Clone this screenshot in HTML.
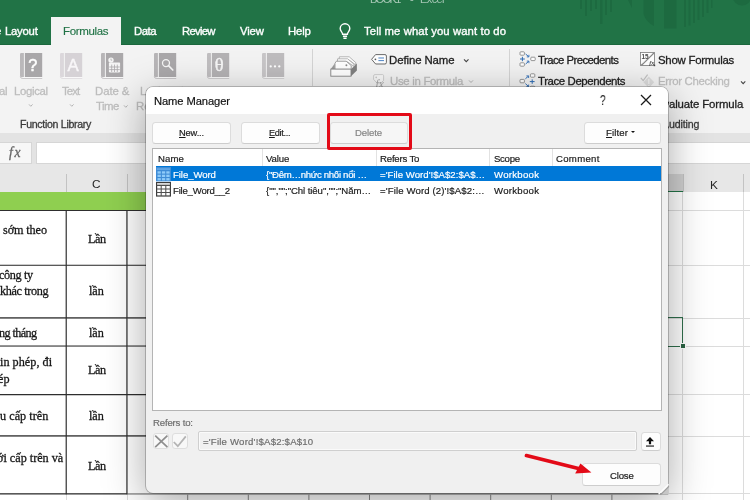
<!DOCTYPE html>
<html lang="vi"><head><meta charset="utf-8"><title>Name Manager</title>
<style>
html,body{margin:0;padding:0}
body{width:750px;height:500px;overflow:hidden;position:relative;background:#fff;font-family:"Liberation Sans",sans-serif}
.a{position:absolute}
.t{position:absolute;white-space:nowrap;line-height:1;will-change:transform}
.t u{text-decoration-thickness:.8px;text-underline-offset:1px}
svg{position:absolute;overflow:visible;will-change:transform}
.btn{position:absolute;box-sizing:border-box;background:#fdfdfd;border:1px solid #dcdcdc;border-bottom-color:#cdcdcd;border-radius:3.5px}
.hl{position:absolute;left:0;width:750px;height:1px}
.vl{position:absolute;width:1px}
</style></head><body>

<!-- ===== title bar / tabs ===== -->
<div class="a" id="titlebar" style="left:0;top:0;width:750px;height:45.4px;background:#217346;box-sizing:border-box;border-bottom:1.5px solid #1b673d"></div>
<svg style="left:560px;top:0" width="190" height="45" viewBox="560 0 190 45">
 <g fill="#1d6a40">
  <rect x="580" y="0" width="2" height="9"/><rect x="585" y="0" width="2" height="16"/><rect x="590" y="0" width="2" height="11"/>
  <rect x="595" y="0" width="2" height="9"/><rect x="600" y="0" width="2.5" height="24"/><rect x="605" y="0" width="2" height="15"/><rect x="610" y="0" width="2" height="12"/>
  <path d="M628 0 L632 0 L632 8 Z"/>
  <path d="M643.5 0 H654 V26 Q646 22 643.5 14 Z"/>
  <rect x="664" y="0" width="12.5" height="28.5"/>
  <rect x="684" y="0" width="2" height="27"/><rect x="688.5" y="0" width="2" height="25.5"/><rect x="693" y="0" width="2" height="23"/><rect x="697.5" y="0" width="2" height="20"/><rect x="702" y="0" width="2" height="17"/><rect x="706.5" y="0" width="2" height="13"/><rect x="711" y="0" width="1.5" height="8"/>
  <circle cx="742" cy="-4" r="9.5"/>
 </g>
</svg>
<div class="a" id="tab-formulas" style="left:51.3px;top:17.4px;width:69.5px;height:29px;background:#f3f3f3"></div>
<!-- lightbulb -->
<svg style="left:338px;top:23px" width="14" height="17" viewBox="0 0 14 17"><g fill="none" stroke="#fff" stroke-width="1.4"><path d="M4.6 11.2 C4.6 9.2 2.2 8.4 2.2 5.6 A4.8 4.8 0 0 1 11.8 5.6 C11.8 8.4 9.4 9.2 9.4 11.2 Z"/><path d="M4.9 13.2 H9.1 M5.4 15.2 H8.6"/></g></svg>

<!-- ===== ribbon ===== -->
<div class="a" id="ribbon" style="left:0;top:45px;width:750px;height:87.5px;background:#f3f3f3"></div>
<div class="vl" style="left:312px;top:49px;height:37px;background:#d4d4d4"></div>
<div class="vl" style="left:509px;top:49px;height:37px;background:#d4d4d4"></div>
<svg style="left:19.8px;top:52.6px" width="22.4" height="25.8" viewBox="0 0 22.4 25.8">
<path d="M1.2 0 H3.9 V24 H1.2 Q0 24 0 22.8 V1.2 Q0 0 1.2 0 Z" fill="#bab8ba"/>
<rect x="4.9" y="0" width="17.3" height="24" fill="#a9a7a9"/>
<path d="M0.3 23.6 Q0.6 25.4 2.2 25.4 H22.2" fill="none" stroke="#bab8ba" stroke-width=".8"/>
<rect x="3" y="24.1" width="19.2" height="0.9" fill="#fafafa"/>
<text x="12.8" y="18.3" font-family="'Liberation Sans',sans-serif" font-size="16.3" fill="#fff" stroke="#fff" stroke-width=".55" text-anchor="middle">?</text></svg>
<svg style="left:60.1px;top:52.6px" width="22.4" height="25.8" viewBox="0 0 22.4 25.8">
<path d="M1.2 0 H3.9 V24 H1.2 Q0 24 0 22.8 V1.2 Q0 0 1.2 0 Z" fill="#dbd7db"/>
<rect x="4.9" y="0" width="17.3" height="24" fill="#d6d2d6"/>
<path d="M0.3 23.6 Q0.6 25.4 2.2 25.4 H22.2" fill="none" stroke="#dbd7db" stroke-width=".8"/>
<rect x="3" y="24.1" width="19.2" height="0.9" fill="#fafafa"/>
<text x="13.1" y="18.2" font-family="'Liberation Sans',sans-serif" font-size="16.8" fill="#f8f6f8" stroke="#f8f6f8" stroke-width=".45" text-anchor="middle">A</text></svg>
<svg style="left:100.8px;top:52.6px" width="22.4" height="25.8" viewBox="0 0 22.4 25.8">
<path d="M1.2 0 H3.9 V24 H1.2 Q0 24 0 22.8 V1.2 Q0 0 1.2 0 Z" fill="#b7b5b7"/>
<rect x="4.9" y="0" width="17.3" height="24" fill="#aaa8aa"/>
<path d="M0.3 23.6 Q0.6 25.4 2.2 25.4 H22.2" fill="none" stroke="#b7b5b7" stroke-width=".8"/>
<rect x="3" y="24.1" width="19.2" height="0.9" fill="#fafafa"/>
<circle cx="10" cy="7.1" r="2.7" fill="#f4f4f4"/><path d="M10 5.6 V7.2 H11.2" stroke="#a9a7a9" stroke-width=".7" fill="none"/><rect x="7.9" y="9.6" width="11.2" height="9.8" rx=".8" fill="#f4f4f4"/><path d="M10.7 11.6 V19 M13.5 11.6 V19 M16.3 11.6 V19 M8.3 14 H18.8 M8.3 16.6 H18.8" stroke="#a9a7a9" stroke-width=".8" fill="none"/></svg>
<svg style="left:153.9px;top:52.6px" width="22.4" height="25.8" viewBox="0 0 22.4 25.8">
<path d="M1.2 0 H3.9 V24 H1.2 Q0 24 0 22.8 V1.2 Q0 0 1.2 0 Z" fill="#b7b5b7"/>
<rect x="4.9" y="0" width="17.3" height="24" fill="#aaa8aa"/>
<path d="M0.3 23.6 Q0.6 25.4 2.2 25.4 H22.2" fill="none" stroke="#b7b5b7" stroke-width=".8"/>
<rect x="3" y="24.1" width="19.2" height="0.9" fill="#fafafa"/>
<circle cx="12" cy="10.1" r="3.5" fill="none" stroke="#f6f6f6" stroke-width="1.3"/><path d="M14.5 12.7 L18.8 17" stroke="#f6f6f6" stroke-width="1.7" stroke-linecap="round"/></svg>
<svg style="left:207.3px;top:52.6px" width="22.4" height="25.8" viewBox="0 0 22.4 25.8">
<path d="M1.2 0 H3.9 V24 H1.2 Q0 24 0 22.8 V1.2 Q0 0 1.2 0 Z" fill="#c0bec0"/>
<rect x="4.9" y="0" width="17.3" height="24" fill="#b4b2b4"/>
<path d="M0.3 23.6 Q0.6 25.4 2.2 25.4 H22.2" fill="none" stroke="#c0bec0" stroke-width=".8"/>
<rect x="3" y="24.1" width="19.2" height="0.9" fill="#fafafa"/>
<text x="12.1" y="18.4" font-family="'Liberation Serif',serif" font-size="18.6" fill="#f6f6f6" stroke="#f6f6f6" stroke-width=".4" text-anchor="middle">θ</text></svg>
<svg style="left:262.2px;top:52.6px" width="22.4" height="25.8" viewBox="0 0 22.4 25.8">
<path d="M1.2 0 H3.9 V24 H1.2 Q0 24 0 22.8 V1.2 Q0 0 1.2 0 Z" fill="#c8c6c8"/>
<rect x="4.9" y="0" width="17.3" height="24" fill="#bebcbe"/>
<path d="M0.3 23.6 Q0.6 25.4 2.2 25.4 H22.2" fill="none" stroke="#c8c6c8" stroke-width=".8"/>
<rect x="3" y="24.1" width="19.2" height="0.9" fill="#fafafa"/>
<circle cx="8.7" cy="13.4" r="1.15" fill="#fff"/><circle cx="13" cy="13.4" r="1.15" fill="#fff"/><circle cx="17.3" cy="13.4" r="1.15" fill="#fff"/></svg>
<svg style="left:29.3px;top:104.4px" width="3.6" height="2.9" viewBox="0 0 3.6 2.9"><path d="M0 0.4 L1.8 2.3 L3.6 0.4" fill="none" stroke="#b4b4b4" stroke-width="1.0"/></svg>
<svg style="left:69.7px;top:104.4px" width="3.6" height="2.9" viewBox="0 0 3.6 2.9"><path d="M0 0.4 L1.8 2.3 L3.6 0.4" fill="none" stroke="#b4b4b4" stroke-width="1.0"/></svg>
<svg style="left:124px;top:104.8px" width="3.6" height="2.9" viewBox="0 0 3.6 2.9"><path d="M0 0.4 L1.8 2.3 L3.6 0.4" fill="none" stroke="#b4b4b4" stroke-width="1.0"/></svg>
<svg style="left:464.4px;top:58.7px" width="4.5" height="3.3" viewBox="0 0 4.5 3.3"><path d="M0 0.4 L2.25 2.6999999999999997 L4.5 0.4" fill="none" stroke="#444" stroke-width="1.05"/></svg>
<svg style="left:468.6px;top:80.2px" width="4" height="3.1" viewBox="0 0 4 3.1"><path d="M0 0.4 L2.0 2.5 L4 0.4" fill="none" stroke="#b4b4b4" stroke-width="1.0"/></svg>
<svg style="left:741px;top:81px" width="4.3" height="3.3" viewBox="0 0 4.3 3.3"><path d="M0 0.4 L2.15 2.6999999999999997 L4.3 0.4" fill="none" stroke="#444" stroke-width="1.05"/></svg>
<svg style="left:330px;top:55.6px" width="28" height="21.4" viewBox="0 0 28 21.4">
<path d="M9.4 0.8 H19.2 L25.8 6.6 V9 L19 4 H9 Z" fill="#fff" stroke="#9a9a9a" stroke-width=".7"/>
<path d="M7.6 2.8 H17.6 L24 8.2 V10.4 L17.6 6 H7.4 Z" fill="#fff" stroke="#9a9a9a" stroke-width=".7"/>
<path d="M6.4 5.2 H16.2 L21.2 9.6 V13.4 H5 V7.2 Z" fill="#fff" stroke="#8a8a8a" stroke-width=".8"/>
<circle cx="16.4" cy="9.3" r=".95" fill="#8a8a8a"/>
<path d="M0.8 13 L4.8 7.6 V13 Z" fill="#9a9a9a"/>
<path d="M21 13.2 L26.9 7.6 V14.4 L21 20.2 Z" fill="#808080"/>
<rect x="0.8" y="13.1" width="20.2" height="7.1" fill="#fff" stroke="#858585" stroke-width=".9"/>
</svg>
<svg style="left:371px;top:53.8px" width="16" height="10.6" viewBox="0 0 16 10.6">
<path d="M4.6 0.6 H14 Q15.4 0.6 15.4 2 V8.6 Q15.4 10 14 10 H4.6 L0.6 5.3 Z" fill="#fff" stroke="#5a5a5a" stroke-width=".9"/>
<circle cx="4.4" cy="5.3" r=".9" fill="#5a5a5a"/>
<path d="M7.4 4 H13 M7.4 6.6 H13" stroke="#3b78c2" stroke-width=".9"/>
</svg>
<svg style="left:373px;top:73.6px" width="12" height="14" viewBox="0 0 12 14">
<path d="M2 0.6 H9.6 Q10.6 0.6 10.6 1.6 V6.4 L8 9 H4 L0.6 5.4 V2 Q0.6 0.6 2 0.6 Z" fill="#f8f8f8" stroke="#c4c4c4" stroke-width=".8"/>
<circle cx="3.2" cy="3.4" r=".8" fill="#c4c4c4"/>
<text x="2.6" y="13.6" font-family="'Liberation Serif',serif" font-style="italic" font-size="11.5" fill="#a6a6a6">fx</text>
</svg>
<svg style="left:518.6px;top:50.8px" width="17" height="17" viewBox="0 0 17 17">
<g fill="#fff" stroke="#7d7d7d" stroke-width=".8"><rect x="1" y="0.8" width="4.4" height="3.4" rx=".8"/><rect x="1" y="11.8" width="4.4" height="3.4" rx=".8"/><rect x="11.8" y="6.2" width="4.4" height="3.4" rx=".8"/></g>
<g stroke="#2f6db5" stroke-width="1" fill="none"><path d="M1 8 H5.8 M3.4 5.8 V10.2"/><path d="M6.6 3 L9.6 5.6 M6.6 13 L9.6 10.4"/><path d="M7.8 5.9 H9.9 V3.8 M7.8 10.1 H9.9 V12.2" stroke-width=".9"/></g>
</svg>
<svg style="left:518.6px;top:72.8px" width="17" height="17" viewBox="0 0 17 17">
<g fill="#fff" stroke="#7d7d7d" stroke-width=".8"><rect x="1" y="6.4" width="4.4" height="3.4" rx=".8"/><rect x="11.4" y="0.8" width="4.4" height="3.4" rx=".8"/><rect x="11.4" y="13.2" width="4.4" height="3.4" rx=".8"/></g>
<g stroke="#2f6db5" stroke-width="1" fill="none"><path d="M10.8 8.6 H15.6 M13.2 6.4 V10.8"/><path d="M6.4 5.8 L9.4 3.2 M6.4 10.6 L9.4 13.4"/><path d="M7.4 2.9 H9.6 V5 M7.4 13.7 H9.6 V11.6" stroke-width=".9"/></g>
</svg>
<svg style="left:640.2px;top:52px" width="15.4" height="14.4" viewBox="0 0 15.4 14.4">
<rect x="0.5" y="0.5" width="14" height="13" fill="#fdfdfd" stroke="#7c7c7c" stroke-width=".8"/>
<path d="M13.8 1 L1.4 13.2" stroke="#858585" stroke-width="1.5"/>
<path d="M12.6 1.4 L2.4 11.6" stroke="#fdfdfd" stroke-width=".5"/>
<text x="1.5" y="6.9" font-family="'Liberation Sans',sans-serif" font-weight="700" font-size="6.4" fill="#4a4a4a">15</text>
<text x="9.2" y="12.6" font-family="'Liberation Serif',serif" font-style="italic" font-weight="700" font-size="6.2" fill="#4a4a4a">fx</text>
<rect x="13.7" y="12.7" width="1.5" height="1.5" fill="#444"/>
</svg>
<svg style="left:640px;top:73.6px" width="15" height="14" viewBox="0 0 15 14">
<path d="M8.8 2.4 L14.2 8.2 L8.8 14 L3.4 8.2 Z" fill="#dcdcdc"/>
<path d="M8.8 5 V10 M8.8 11 V12.2" stroke="#f0f0f0" stroke-width="1.3"/>
<path d="M0.8 3.8 L3.2 6.6 L7.6 0.6" fill="none" stroke="#c2c2c2" stroke-width="1.2"/>
</svg>

<!-- ===== formula bar ===== -->
<div class="a" id="fbar" style="left:0;top:132.5px;width:750px;height:37.5px;background:#e3e3e3"></div>
<div class="a" style="left:-2px;top:142px;width:34px;height:22px;background:#f7f7f7;box-sizing:border-box;border:1px solid #d6d6d6"></div>
<div class="a" style="left:36px;top:142px;width:716px;height:22px;background:#fff;box-sizing:border-box;border:1px solid #d6d6d6"></div>

<!-- ===== column headers ===== -->
<div class="a" id="colhdr" style="left:0;top:164px;width:750px;height:28px;background:#e7e7e7"></div>
<div class="vl" style="left:66px;top:174px;height:18px;background:#c3c3c3"></div>
<div class="vl" style="left:127px;top:174px;height:18px;background:#c3c3c3"></div>
<div class="a" style="left:668px;top:174px;width:14.6px;height:18px;background:#cfcfcf;border-bottom:1.5px solid #217346;box-sizing:border-box"></div>
<div class="vl" style="left:682.6px;top:174px;height:18px;background:#c3c3c3"></div>
<div class="vl" style="left:743px;top:174px;height:18px;background:#c3c3c3"></div>

<!-- ===== sheet ===== -->
<div class="a" id="sheet" style="left:0;top:192px;width:750px;height:308px;background:#fff"></div>
<!-- light grid (right side) -->
<div class="hl" style="top:210px;background:#dcdcdc"></div>
<div class="hl" style="top:265px;background:#dcdcdc"></div>
<div class="hl" style="top:317.5px;background:#dcdcdc"></div>
<div class="hl" style="top:345.5px;background:#dcdcdc"></div>
<div class="hl" style="top:394px;background:#dcdcdc"></div>
<div class="hl" style="top:436px;background:#dcdcdc"></div>
<div class="hl" style="top:493px;background:#dcdcdc"></div>
<div class="vl" style="left:66px;top:192px;height:308px;background:#dcdcdc"></div>
<div class="vl" style="left:127px;top:192px;height:308px;background:#dcdcdc"></div>
<div class="vl" style="left:682.4px;top:192px;height:308px;background:#dcdcdc"></div>
<div class="vl" style="left:743px;top:192px;height:308px;background:#dcdcdc"></div>
<!-- green header row -->
<div class="a" style="left:0;top:192px;width:660px;height:18px;background:#8fcf50"></div>
<!-- dark table borders -->
<svg style="left:0;top:0" width="750" height="500" viewBox="0 0 750 500"><g stroke="#2e2e2e" stroke-width="1.15" fill="none"><path d="M0 210.5 H668"/><path d="M0 265.2 H668"/><path d="M0 317.9 H668"/><path d="M0 346.0 H668"/><path d="M0 394.6 H668"/><path d="M0 435.9 H668"/><path d="M0 493.8 H127.5"/><path d="M66.2 210 V494.3"/><path d="M126.9 210 V494.3"/></g><path d="M127.5 494 H668" stroke="#6e6e6e" stroke-width="1"/><g stroke="#8a8a8a" stroke-width="1"><path d="M187.7 494.5 V500"/><path d="M248.3 494.5 V500"/><path d="M308.9 494.5 V500"/><path d="M369.5 494.5 V500"/><path d="M430.1 494.5 V500"/><path d="M490.7 494.5 V500"/><path d="M551.3 494.5 V500"/><path d="M611.9 494.5 V500"/></g></svg>
<!-- selected cell -->
<div class="a" style="left:660px;top:317.2px;width:23px;height:29.6px;box-sizing:border-box;border:1.6px solid #2f6f4c"></div>
<div class="a" style="left:679.8px;top:343.2px;width:3.8px;height:3.8px;background:#2a6343;border:0.7px solid #fff"></div>

<span class="t" style="left:370.3px;top:-5.70px;font-size:11px;letter-spacing:-1.627px;color:rgba(255,255,255,.6);">BOOK1</span>
<span class="t" style="left:410.2px;top:-5.70px;font-size:11px;letter-spacing:0.000px;color:rgba(255,255,255,.6);">-</span>
<span class="t" style="left:420.0px;top:-5.70px;font-size:11px;letter-spacing:-0.602px;color:rgba(255,255,255,.6);">Excel</span>
<span class="t" style="left:-4.9px;top:25.60px;font-size:11.3px;letter-spacing:0.000px;color:rgba(255,255,255,.97);-webkit-text-stroke:.38px;">e</span>
<span class="t" style="left:5.4px;top:25.60px;font-size:11.3px;letter-spacing:-0.224px;color:rgba(255,255,255,.97);-webkit-text-stroke:.38px;">Layout</span>
<span class="t" style="left:62.8px;top:25.60px;font-size:11.5px;letter-spacing:-0.334px;color:#217346;-webkit-text-stroke:.15px;">Formulas</span>
<span class="t" style="left:133.8px;top:25.60px;font-size:11.3px;letter-spacing:-0.458px;color:rgba(255,255,255,.97);-webkit-text-stroke:.38px;">Data</span>
<span class="t" style="left:181.9px;top:25.60px;font-size:11.3px;letter-spacing:-0.729px;color:rgba(255,255,255,.97);-webkit-text-stroke:.38px;">Review</span>
<span class="t" style="left:240.2px;top:25.60px;font-size:11.3px;letter-spacing:-0.166px;color:rgba(255,255,255,.97);-webkit-text-stroke:.38px;">View</span>
<span class="t" style="left:288.3px;top:25.60px;font-size:11.3px;letter-spacing:-0.145px;color:rgba(255,255,255,.97);-webkit-text-stroke:.38px;">Help</span>
<span class="t" style="left:363.5px;top:25.60px;font-size:11.3px;letter-spacing:0.100px;color:rgba(255,255,255,.97);-webkit-text-stroke:.38px;">Tell me what you want to do</span>
<span class="t" style="left:-1.3px;top:85.60px;font-size:11.4px;letter-spacing:-0.300px;color:#bdbdbd;-webkit-text-stroke:.3px;">al</span>
<span class="t" style="left:14.0px;top:85.60px;font-size:11.4px;letter-spacing:-0.352px;color:#bdbdbd;-webkit-text-stroke:.3px;">Logical</span>
<span class="t" style="left:62.4px;top:85.60px;font-size:11.4px;letter-spacing:-0.897px;color:#bdbdbd;-webkit-text-stroke:.3px;">Text</span>
<span class="t" style="left:94.6px;top:85.60px;font-size:11.4px;letter-spacing:-0.086px;color:#bdbdbd;-webkit-text-stroke:.3px;">Date &amp;</span>
<span class="t" style="left:95.6px;top:101.00px;font-size:11.4px;letter-spacing:-0.497px;color:#bdbdbd;-webkit-text-stroke:.3px;">Time</span>
<span class="t" style="left:140.0px;top:85.60px;font-size:11.4px;letter-spacing:-0.306px;color:#bdbdbd;-webkit-text-stroke:.3px;">Lookup &amp;</span>
<span class="t" style="left:136.0px;top:101.00px;font-size:11.4px;letter-spacing:-0.070px;color:#bdbdbd;-webkit-text-stroke:.3px;">Reference</span>
<span class="t" style="left:19.6px;top:119.40px;font-size:10.6px;letter-spacing:-0.305px;color:#3b3b3b;-webkit-text-stroke:.3px;">Function Library</span>
<span class="t" style="left:389.4px;top:55.00px;font-size:11.4px;letter-spacing:-0.088px;color:#222;-webkit-text-stroke:.3px;">Define Name</span>
<span class="t" style="left:389.8px;top:76.40px;font-size:11.4px;letter-spacing:-0.295px;color:#bdbdbd;-webkit-text-stroke:.3px;">Use in Formula</span>
<span class="t" style="left:538.1px;top:54.80px;font-size:11.4px;letter-spacing:-0.572px;color:#222;-webkit-text-stroke:.3px;">Trace Precedents</span>
<span class="t" style="left:538.1px;top:76.40px;font-size:11.4px;letter-spacing:-0.386px;color:#222;-webkit-text-stroke:.3px;">Trace Dependents</span>
<span class="t" style="left:657.7px;top:54.80px;font-size:11.4px;letter-spacing:-0.237px;color:#222;-webkit-text-stroke:.3px;">Show Formulas</span>
<span class="t" style="left:657.7px;top:76.40px;font-size:11.4px;letter-spacing:-0.313px;color:#bdbdbd;-webkit-text-stroke:.3px;">Error Checking</span>
<span class="t" style="left:655.5px;top:98.80px;font-size:11.4px;letter-spacing:-0.200px;color:#222;-webkit-text-stroke:.3px;">Ev</span>
<span class="t" style="left:668.7px;top:98.80px;font-size:11.4px;letter-spacing:-0.130px;color:#222;-webkit-text-stroke:.3px;">aluate Formula</span>
<span class="t" style="left:622.5px;top:119.20px;font-size:10.6px;letter-spacing:-0.300px;color:#3b3b3b;-webkit-text-stroke:.3px;">Formula A</span>
<span class="t" style="left:668.6px;top:119.20px;font-size:10.6px;letter-spacing:-0.136px;color:#3b3b3b;-webkit-text-stroke:.3px;">uditing</span>
<span class="t" style="left:9.0px;top:146.30px;font-size:13.6px;letter-spacing:1.788px;color:#666;font-family:'Liberation Serif', serif;font-style:italic;-webkit-text-stroke:.3px #666;">fx</span>
<span class="t" style="left:92.3px;top:179.40px;font-size:11.8px;letter-spacing:0.000px;color:#262626;">C</span>
<span class="t" style="left:709.8px;top:179.60px;font-size:11.8px;letter-spacing:0.000px;color:#262626;">K</span>
<span class="t" style="left:3.3px;top:223.80px;font-size:12.2px;letter-spacing:-0.100px;color:#161616;font-family:'Liberation Serif', serif;-webkit-text-stroke:.28px #161616;">sớm theo</span>
<span class="t" style="left:87.6px;top:232.60px;font-size:12.2px;letter-spacing:-0.477px;color:#161616;font-family:'Liberation Serif', serif;-webkit-text-stroke:.28px #161616;">Lần</span>
<span class="t" style="left:-0.6px;top:269.30px;font-size:12.2px;letter-spacing:-0.370px;color:#161616;font-family:'Liberation Serif', serif;-webkit-text-stroke:.28px #161616;">công ty</span>
<span class="t" style="left:-0.2px;top:285.40px;font-size:12.2px;letter-spacing:-0.353px;color:#161616;font-family:'Liberation Serif', serif;-webkit-text-stroke:.28px #161616;">khác trong</span>
<span class="t" style="left:89.1px;top:285.40px;font-size:12.2px;letter-spacing:-0.045px;color:#161616;font-family:'Liberation Serif', serif;-webkit-text-stroke:.28px #161616;">lần</span>
<span class="t" style="left:-1.2px;top:326.60px;font-size:12.2px;letter-spacing:-0.587px;color:#161616;font-family:'Liberation Serif', serif;-webkit-text-stroke:.28px #161616;">ng tháng</span>
<span class="t" style="left:89.1px;top:326.60px;font-size:12.2px;letter-spacing:-0.045px;color:#161616;font-family:'Liberation Serif', serif;-webkit-text-stroke:.28px #161616;">lần</span>
<span class="t" style="left:-0.4px;top:356.00px;font-size:12.2px;letter-spacing:0.030px;color:#161616;font-family:'Liberation Serif', serif;-webkit-text-stroke:.28px #161616;">in phép, đi</span>
<span class="t" style="left:-2.5px;top:372.80px;font-size:12.2px;letter-spacing:0.000px;color:#161616;font-family:'Liberation Serif', serif;-webkit-text-stroke:.28px #161616;">ép</span>
<span class="t" style="left:87.6px;top:364.40px;font-size:12.2px;letter-spacing:-0.477px;color:#161616;font-family:'Liberation Serif', serif;-webkit-text-stroke:.28px #161616;">Lần</span>
<span class="t" style="left:-0.3px;top:410.00px;font-size:12.2px;letter-spacing:0.026px;color:#161616;font-family:'Liberation Serif', serif;-webkit-text-stroke:.28px #161616;">u cấp trên</span>
<span class="t" style="left:89.1px;top:410.00px;font-size:12.2px;letter-spacing:-0.045px;color:#161616;font-family:'Liberation Serif', serif;-webkit-text-stroke:.28px #161616;">lần</span>
<span class="t" style="left:-2.8px;top:451.50px;font-size:12.2px;letter-spacing:-0.011px;color:#161616;font-family:'Liberation Serif', serif;-webkit-text-stroke:.28px #161616;">ới cấp trên và</span>
<span class="t" style="left:87.6px;top:459.60px;font-size:12.2px;letter-spacing:-0.477px;color:#161616;font-family:'Liberation Serif', serif;-webkit-text-stroke:.28px #161616;">Lần</span>

<!-- ===== dialog ===== -->
<div class="a" id="dialog" style="left:146px;top:87px;width:522px;height:406.4px;background:#f0f0f0;border-radius:7px;box-shadow:0 0 0 .8px rgba(0,0,0,.28),0 10px 42px 0 rgba(0,0,0,.35);overflow:hidden">
  <div class="a" style="left:0;top:0;width:522px;height:27px;background:#fff"></div>
</div>
<!-- close X -->
<svg style="left:641px;top:95px" width="10" height="10" viewBox="0 0 10 10"><path d="M0 0 L10 10 M10 0 L0 10" stroke="#1a1a1a" stroke-width="1.25" fill="none"/></svg>
<!-- buttons -->
<div class="btn" style="left:152px;top:121.5px;width:79px;height:22.3px"></div>
<div class="btn" style="left:240.6px;top:121.5px;width:79px;height:22.3px"></div>
<div class="btn" style="left:330px;top:121.5px;width:78px;height:22.3px;background:#f6f6f6"></div>
<div class="btn" style="left:583.5px;top:121.8px;width:77.2px;height:22px"></div>
<div class="a" style="left:631px;top:131px;width:0;height:0;border-left:2.3px solid transparent;border-right:2.3px solid transparent;border-top:2.6px solid #111"></div>
<!-- list -->
<div class="a" id="list" style="left:152.4px;top:148px;width:509.4px;height:263.4px;background:#fff;box-sizing:border-box;border:1px solid #b4b4b4"></div>
<div class="vl" style="left:262px;top:149px;height:16.5px;background:#e2e2e2"></div>
<div class="vl" style="left:375.6px;top:149px;height:16.5px;background:#e2e2e2"></div>
<div class="vl" style="left:489.4px;top:149px;height:16.5px;background:#e2e2e2"></div>
<div class="vl" style="left:551.6px;top:149px;height:16.5px;background:#e2e2e2"></div>
<div class="a" style="left:156.2px;top:166px;width:504.6px;height:15px;background:#0078d7"></div>
<!-- row icons -->
<svg style="left:156.3px;top:166.5px" width="15" height="14.4" viewBox="0 0 15 14.4"><rect x="0" y="0" width="15" height="14.4" fill="#3f8cd6"/><rect x="0.8" y="1.5" width="13.4" height="1.1" fill="#7ab8ee"/><g fill="#8fcbf9"><rect x="1.5" y="4.3" width="3.3" height="2.3"/><rect x="5.9" y="4.3" width="3.3" height="2.3"/><rect x="10.3" y="4.3" width="3.3" height="2.3"/><rect x="1.5" y="7.7" width="3.3" height="2.3"/><rect x="5.9" y="7.7" width="3.3" height="2.3"/><rect x="10.3" y="7.7" width="3.3" height="2.3"/><rect x="1.5" y="11.1" width="3.3" height="2.3"/><rect x="5.9" y="11.1" width="3.3" height="2.3"/><rect x="10.3" y="11.1" width="3.3" height="2.3"/></g></svg>
<svg style="left:156.3px;top:182.3px" width="15" height="14.6" viewBox="0 0 15 14.6"><rect x="0.6" y="0.6" width="13.8" height="13.4" fill="#fff" stroke="#3c3c3c" stroke-width="1.2"/><rect x="1.2" y="1.4" width="12.6" height="1.2" fill="#d8d8d8"/><path d="M0.6 3.4 H14.4 M0.6 7 H14.4 M0.6 10.5 H14.4 M5.2 3.4 V14 M9.8 3.4 V14" stroke="#4f4f4f" stroke-width="1.05" fill="none"/></svg>
<!-- refers-to controls -->
<div class="btn" style="left:153.3px;top:433.3px;width:15.8px;height:16px;background:#f8f8f8;border-color:#dedede;border-radius:3px"></div>
<div class="btn" style="left:171.6px;top:433.3px;width:16.8px;height:16px;background:#f8f8f8;border-color:#dedede;border-radius:3px"></div>
<svg style="left:153px;top:433px" width="36" height="18" viewBox="0 0 36 18"><path d="M2.2 2.6 L14.4 14.2 M14.4 2.6 L2.2 14.2" stroke="#8e8e8e" stroke-width="1.7" fill="none"/><path d="M20.8 9 L24.8 13.2 L32.8 3.4" stroke="#b4b4b4" stroke-width="1.8" fill="none"/></svg>
<div class="a" style="left:198.4px;top:431px;width:438.6px;height:20.4px;background:#f1f1f1;box-sizing:border-box;border:1px solid #cfcfcf;border-radius:2px;box-shadow:inset 0 0 0 1px #fafafa"></div>
<div class="btn" style="left:641px;top:432.4px;width:19.6px;height:18.4px"></div>
<svg style="left:645.3px;top:436.6px" width="10" height="11" viewBox="0 0 10 11"><path d="M5 0 L9 4.3 H6.1 V7.3 H3.9 V4.3 H1 Z" fill="#111"/><rect x="1" y="8.5" width="8" height="1.1" fill="#111"/></svg>
<div class="btn" style="left:582.2px;top:463.3px;width:78.5px;height:22.4px"></div>
<!-- resize grip -->
<svg style="left:656px;top:482px" width="13" height="12.4" viewBox="0 0 13 12.4"><path d="M12.9 4.6 L12.9 12.4 L4.6 12.4 Z" fill="#c6c6c6"/><path d="M12.6 2.2 L2.6 12.2" stroke="#fdfdfd" stroke-width="1.5"/><path d="M12.9 4.4 L4.9 12.4" stroke="#9c9c9c" stroke-width="1.1"/></svg>

<span class="t" style="left:153.9px;top:95.50px;font-size:11.2px;letter-spacing:-0.092px;color:#111;-webkit-text-stroke:.18px;">Name Manager</span>
<span class="t" style="left:598.7px;top:94.00px;font-size:13.8px;letter-spacing:0.000px;color:#222;transform:scaleX(.76);">?</span>
<span class="t" style="left:178.7px;top:129.00px;font-size:9.3px;letter-spacing:-0.149px;color:#1a1a1a;-webkit-text-stroke:.18px;"><u>N</u>ew...</span>
<span class="t" style="left:269.1px;top:129.00px;font-size:9.2px;letter-spacing:-0.317px;color:#1a1a1a;-webkit-text-stroke:.18px;"><u>E</u>dit...</span>
<span class="t" style="left:355.3px;top:127.90px;font-size:9.6px;letter-spacing:-0.127px;color:#858585;-webkit-text-stroke:.18px;">Delete</span>
<span class="t" style="left:606.0px;top:128.00px;font-size:9.6px;letter-spacing:0.134px;color:#1a1a1a;-webkit-text-stroke:.18px;"><u>F</u>ilter</span>
<span class="t" style="left:158.0px;top:153.70px;font-size:9.6px;letter-spacing:0.102px;color:#1a1a1a;-webkit-text-stroke:.18px;">Name</span>
<span class="t" style="left:266.0px;top:153.70px;font-size:9.6px;letter-spacing:-0.107px;color:#1a1a1a;-webkit-text-stroke:.18px;">Value</span>
<span class="t" style="left:379.6px;top:153.70px;font-size:9.6px;letter-spacing:-0.186px;color:#1a1a1a;-webkit-text-stroke:.18px;">Refers To</span>
<span class="t" style="left:493.6px;top:153.70px;font-size:9.6px;letter-spacing:-0.301px;color:#1a1a1a;-webkit-text-stroke:.18px;">Scope</span>
<span class="t" style="left:556.0px;top:153.70px;font-size:9.6px;letter-spacing:0.301px;color:#1a1a1a;-webkit-text-stroke:.18px;">Comment</span>
<span class="t" style="left:172.9px;top:170.20px;font-size:9.6px;letter-spacing:-0.081px;color:#fff;-webkit-text-stroke:.18px;">File_Word</span>
<span class="t" style="left:266.0px;top:170.20px;font-size:9.6px;letter-spacing:-0.295px;color:#fff;-webkit-text-stroke:.18px;">{&quot;Đêm…nhức nhối nổi …</span>
<span class="t" style="left:380.4px;top:170.20px;font-size:9.6px;letter-spacing:0.031px;color:#fff;-webkit-text-stroke:.18px;">=&#x27;File Word&#x27;!$A$2:$A$…</span>
<span class="t" style="left:493.6px;top:170.20px;font-size:9.6px;letter-spacing:0.283px;color:#fff;-webkit-text-stroke:.18px;">Workbook</span>
<span class="t" style="left:172.9px;top:186.10px;font-size:9.6px;letter-spacing:-0.215px;color:#1a1a1a;-webkit-text-stroke:.18px;">File_Word__2</span>
<span class="t" style="left:266.0px;top:186.10px;font-size:9.6px;letter-spacing:-0.076px;color:#1a1a1a;-webkit-text-stroke:.18px;">{&quot;&quot;,&quot;&quot;;&quot;Chỉ tiêu&quot;,&quot;&quot;;&quot;Năm…</span>
<span class="t" style="left:380.4px;top:186.10px;font-size:9.6px;letter-spacing:0.125px;color:#1a1a1a;-webkit-text-stroke:.18px;">=&#x27;File Word (2)&#x27;!$A$2:…</span>
<span class="t" style="left:493.6px;top:186.10px;font-size:9.6px;letter-spacing:0.283px;color:#1a1a1a;-webkit-text-stroke:.18px;">Workbook</span>
<span class="t" style="left:153.2px;top:417.70px;font-size:9.6px;letter-spacing:-0.177px;color:#6d6d6d;-webkit-text-stroke:.18px;">Refers to:</span>
<span class="t" style="left:203.3px;top:436.70px;font-size:9.6px;letter-spacing:0.208px;color:#6d6d6d;-webkit-text-stroke:.18px;">=&#x27;File Word&#x27;!$A$2:$A$10</span>
<span class="t" style="left:609.7px;top:470.60px;font-size:9.6px;letter-spacing:-0.183px;color:#1a1a1a;-webkit-text-stroke:.18px;">Close</span>

<!-- ===== red annotations ===== -->
<div class="a" style="left:327.2px;top:112.9px;width:84.8px;height:36.7px;box-sizing:border-box;border:3px solid #e30a17;border-radius:2px"></div>
<svg style="left:0;top:0" width="750" height="500" viewBox="0 0 750 500"><path d="M526.4 455.6 L578.4 468.6" stroke="#e30a17" stroke-width="3.6" stroke-linecap="round" fill="none"/><path d="M580.4 463.4 L591.4 472.4 L575.2 473.4 Z" fill="#e30a17"/></svg>
</body></html>
